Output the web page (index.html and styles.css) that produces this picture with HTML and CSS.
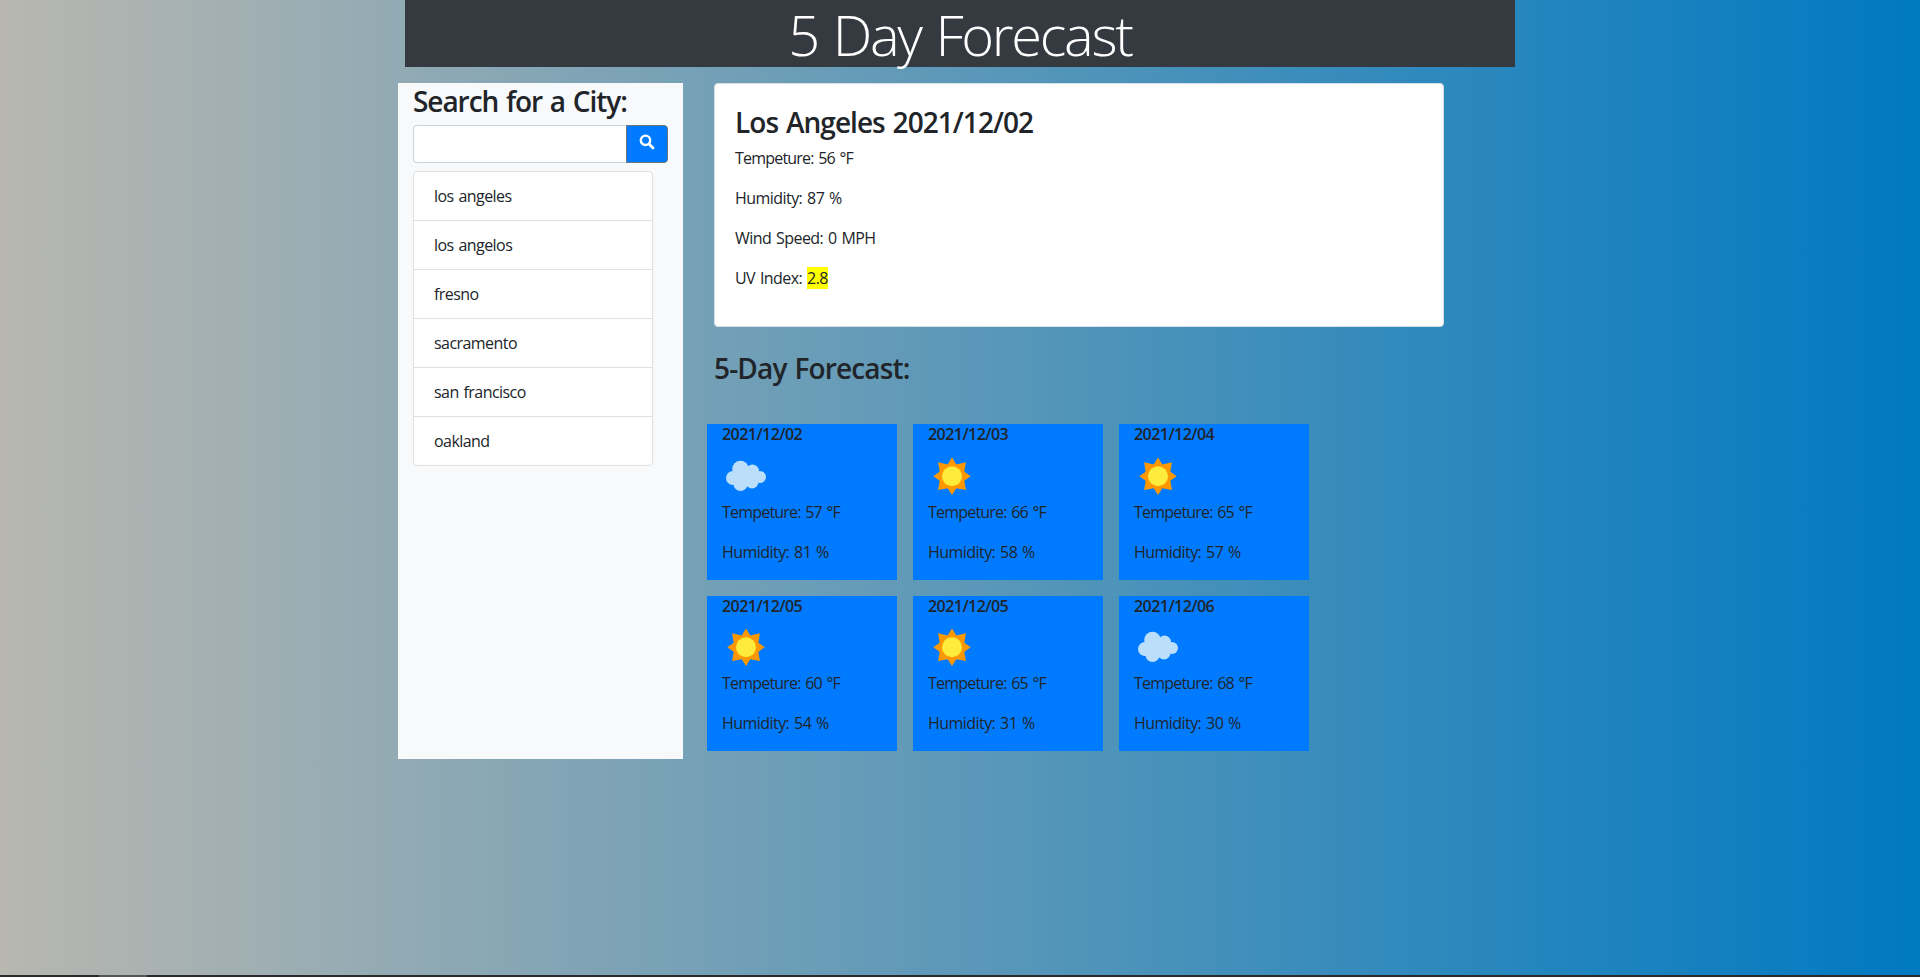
FILE: index.html
```html
<!DOCTYPE html>
<html lang="en">
<head>
<meta charset="utf-8">
<title>5 Day Forecast</title>
<link rel="stylesheet" href="styles.css">
</head>
<body>
<svg class="defs" aria-hidden="true">
  <symbol id="cloud" viewBox="0 0 50 50">
    <g fill="#bbdefb"><circle cx="11" cy="27" r="7"/><circle cx="18.500" cy="18" r="8.300"/><circle cx="30.500" cy="20" r="6.500"/><circle cx="38" cy="26" r="6"/><circle cx="18.500" cy="33" r="7"/><circle cx="30" cy="31" r="6.500"/><rect x="13" y="18" width="22" height="14"/></g>
  </symbol>
  <symbol id="sun" viewBox="0 0 50 50">
    <path fill="#ff9800" d="M24 6.500 28.300 13.400 37.900 11.200 36.300 20.700 42.700 25.200 36.300 29.700 37.900 39.100 28.300 37.300 24 43.900 19.700 37.300 10.100 39.100 11.700 29.700 5.300 25.200 11.700 20.700 10.100 11.200 19.700 13.400Z"/>
    <circle cx="24" cy="25.200" r="10" fill="#ffeb3b"/>
  </symbol>
</svg>
<div class="page">
  <header class="banner"><h1 class="banner-title">5 Day Forecast</h1></header>
  <main class="main">
    <aside class="sidebar">
      <h3 class="heading">Search for a City:</h3>
      <div class="search">
        <input class="search-input" type="text" aria-label="City">
        <button class="search-button" aria-label="Search"><svg width="16" height="16" viewBox="0 0 16 16" fill="none" stroke="#fff"><circle cx="6.500" cy="6.300" r="4.700" stroke-width="2.400"/><path d="M10 10l4 4" stroke-width="2.800" stroke-linecap="round"/></svg></button>
      </div>
      <ul class="history">
        <li>los angeles</li><li>los angelos</li><li>fresno</li><li>sacramento</li><li>san francisco</li><li>oakland</li>
      </ul>
    </aside>
    <div class="content">
      <section class="current">
        <h3 class="heading current-title">Los Angeles 2021/12/02</h3>
        <p class="temp">Tempeture: 56 °F</p>
        <p>Humidity: 87 %</p>
        <p>Wind Speed: 0 MPH</p>
        <p>UV Index: <span class="uv">2.8</span></p>
      </section>
      <h3 class="heading forecast-title">5-Day Forecast:</h3>
      <div class="forecast">
        <div class="day"><h6>2021/12/02</h6><svg class="icon"><use href="#cloud"/></svg><p class="temp">Tempeture: 57 °F</p><p>Humidity: 81 %</p></div>
        <div class="day"><h6>2021/12/03</h6><svg class="icon"><use href="#sun"/></svg><p class="temp">Tempeture: 66 °F</p><p>Humidity: 58 %</p></div>
        <div class="day"><h6>2021/12/04</h6><svg class="icon"><use href="#sun"/></svg><p class="temp">Tempeture: 65 °F</p><p>Humidity: 57 %</p></div>
        <div class="day"><h6>2021/12/05</h6><svg class="icon"><use href="#sun"/></svg><p class="temp">Tempeture: 60 °F</p><p>Humidity: 54 %</p></div>
        <div class="day"><h6>2021/12/05</h6><svg class="icon"><use href="#sun"/></svg><p class="temp">Tempeture: 65 °F</p><p>Humidity: 31 %</p></div>
        <div class="day"><h6>2021/12/06</h6><svg class="icon"><use href="#cloud"/></svg><p class="temp">Tempeture: 68 °F</p><p>Humidity: 30 %</p></div>
      </div>
    </div>
  </main>
</div>
<footer class="strip"><span class="strip-thumb"></span></footer>
</body>
</html>
```
FILE: styles.css
```css
* { box-sizing: border-box; }
body {
  margin: 0;
  min-height: 977px;
  display: flex;
  flex-direction: column;
  font: 16px/24px "Open Sans", "Noto Sans", sans-serif;
  letter-spacing: -0.55px;
  word-spacing: 1.2px;
  color: #212529;
  background: linear-gradient(90deg, #b8b7b0, #0079c1);
}
h1, h3, h6, p, ul { margin: 0; padding: 0; }
.defs { position: absolute; width: 0; height: 0; }
.page { width: 1124px; margin: 0 0 0 398px; flex: 1; }
.banner { margin: 0 7px; height: 67px; background: #343a40; text-align: center; }
.banner-title { font-size: 56px; font-weight: 300; line-height: 67px; padding-top: 1px; color: #fff; letter-spacing: -2.3px; word-spacing: 2.5px; }
.main { display: flex; align-items: flex-start; margin-top: 16px; }
.sidebar { width: 285px; height: 676px; padding: 0 15px; background: #f8f9fa; }
.heading { font-size: 28px; line-height: 34px; font-weight: 600; letter-spacing: -0.95px; word-spacing: 1.5px; }
.sidebar .heading { padding-top: 2px; line-height: 32px; letter-spacing: -1.05px; }
.search { display: flex; height: 38px; margin: 8px 0; }
.search-input { flex: 1; min-width: 0; border: 1px solid #ced4da; border-right: 0; border-radius: 4px 0 0 4px; background: #fff; }
.search-button { width: 42px; padding: 0 0 4px; border: 1px solid #6c757d; border-radius: 0 4px 4px 0; background: #007bff; display: flex; align-items: center; justify-content: center; }
.history { list-style: none; width: 240px; border: 1px solid #dfdfdf; border-radius: 4px; background: #fff; overflow: hidden; }
.history li { height: 49px; padding: 12px 20px; border-bottom: 1px solid #dfdfdf; }
.history li:last-child { height: 48px; border-bottom: 0; }
.content { margin-left: 31px; width: 730px; }
.current { height: 244px; padding: 20px; border: 1px solid #d8dfe4; border-radius: 4px; background: #fff; }
.current-title { padding-top: 1px; margin-bottom: 7px; }
.current p { margin-bottom: 16px; }
.current .temp, .day .temp { letter-spacing: -0.8px; }
.uv { background: #ff0; }
.forecast-title { margin-top: 24px; letter-spacing: -0.85px; }
.forecast { display: grid; grid-template-columns: repeat(3, 190px); grid-template-rows: 156px 155px; gap: 16px; margin: 39px 0 0 -7px; }
.day { padding: 0 15px; background: #007bff; }
.day h6 { font-size: 16px; line-height: 19px; font-weight: 600; padding-top: 1px; margin-bottom: 7px; }
.day:nth-child(n+4) h6 { margin-bottom: 6px; }
.icon { display: block; width: 50px; height: 50px; margin-bottom: -1px; }
.day p { margin-bottom: 16px; }
.strip { height: 2px; background: #292a2c; padding-left: 99px; }
.strip-thumb { display: block; width: 48px; height: 2px; background: #555; }
```
